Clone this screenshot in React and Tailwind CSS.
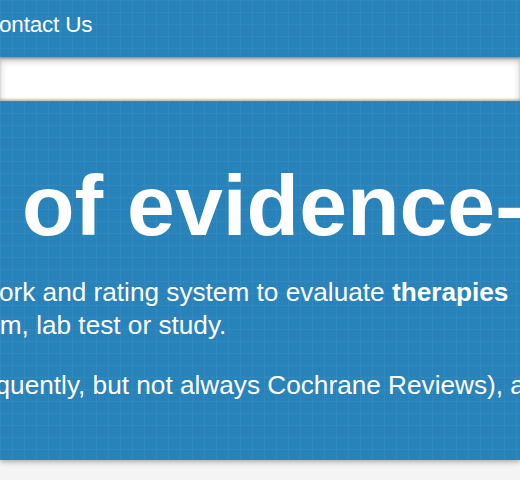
export default function App() {
  const grid =
    "bg-[#2883bb] bg-[linear-gradient(rgba(255,255,255,0.045)_1px,transparent_1px),linear-gradient(90deg,rgba(255,255,255,0.045)_1px,transparent_1px)] bg-[size:12px_12px]";
  return (
    <div
      className="w-[520px] h-[480px] overflow-hidden bg-[#f4f4f4] text-white"
      style={{ fontFamily: '"Liberation Sans", Arial, sans-serif' }}
    >
      <div className={`${grid} h-[57px] relative z-10 shadow-[0_1px_3px_rgba(0,0,0,0.45)]`}>
        <div className="ml-[-17px] pt-[10px] text-[22.5px] leading-[30px] tracking-[-0.2px] whitespace-nowrap">
          Contact Us
        </div>
      </div>
      <div className="h-[44px] bg-white shadow-[inset_0_4px_7px_rgba(0,0,0,0.22),inset_0_-2px_2px_rgba(0,0,0,0.18)]" />
      <div
        className={`${grid} h-[359px] relative z-10 shadow-[0_2px_5px_rgba(0,0,0,0.3)] pt-[61px] overflow-hidden`}
      >
        <h1 className="ml-[22px] text-[86px] leading-[86px] font-bold whitespace-nowrap">
          of evidence-
        </h1>
        <p className="mt-[28px] ml-[-20px] text-[26.2px] leading-[33px] whitespace-nowrap">
          work and rating system to evaluate <b>therapies</b>
          <br />
          <span className="ml-[-53px]">platform, lab test or study.</span>
        </p>
        <p className="mt-[27px] ml-[-35px] text-[26.2px] leading-[33px] whitespace-nowrap">
          frequently, but not always Cochrane Reviews), and
        </p>
      </div>
    </div>
  );
}
